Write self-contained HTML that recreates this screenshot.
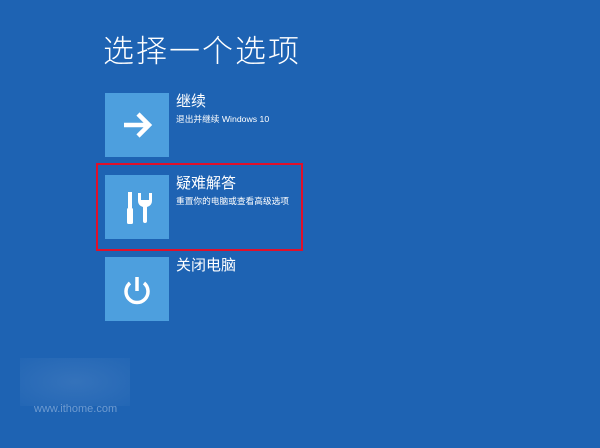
<!DOCTYPE html>
<html><head><meta charset="utf-8"><style>
body{margin:0;width:600px;height:448px;background:#1e63b3;overflow:hidden;position:relative;font-family:"Liberation Sans","Noto Sans CJK SC",sans-serif;color:#fff}
.h{position:absolute;left:103px;top:26px;font-size:31px;letter-spacing:2px;font-weight:300}
.t{position:absolute;left:105px;width:64px;height:64px;background:#4d9fde}
.t svg{position:absolute;left:0;top:0}
.n{position:absolute;left:176px;font-size:15px}
.s{position:absolute;left:176px;font-size:8.7px}
.box{position:absolute;left:96px;top:163px;width:203px;height:84px;border:2px solid #e0102a}
.w{position:absolute;left:34px;top:403px;font-size:11px;color:#6f9bd0}
.g{position:absolute;left:20px;top:358px;width:110px;height:48px;background:radial-gradient(ellipse at 50% 50%,rgba(120,160,210,.25),rgba(120,160,210,.06))}
</style></head><body>
<div class="h">选择一个选项</div>
<div class="t" style="top:93px"><svg width="64" height="64"><path d="M19 32H44M33 21L44 32L33 43" stroke="#fff" stroke-width="4.5" fill="none"/></svg></div>
<div class="n" style="top:90px">继续</div>
<div class="s" style="top:112px">退出并继续 Windows 10</div>
<div class="box"></div>
<div class="t" style="top:175px"><svg width="64" height="64"><rect x="23" y="17" width="4" height="16" fill="#fff"/><rect x="22" y="33" width="6" height="16" rx="1.5" fill="#fff"/><path d="M33 18v8a6 6 0 0 0 5 6v14a2 2 0 0 0 4 0V32a6 6 0 0 0 5-6v-8l-3 0v7h-8v-7z" fill="#fff"/></svg></div>
<div class="n" style="top:172px">疑难解答</div>
<div class="s" style="top:194px">重置你的电脑或查看高级选项</div>
<div class="t" style="top:257px"><svg width="64" height="64"><path d="M25 26a11 11 0 1 0 14 0" stroke="#fff" stroke-width="3.5" fill="none"/><line x1="32" y1="20" x2="32" y2="34" stroke="#fff" stroke-width="3.5"/></svg></div>
<div class="n" style="top:254px">关闭电脑</div>
<div class="g"></div>
<div class="w">www.ithome.com</div>
</body></html>
